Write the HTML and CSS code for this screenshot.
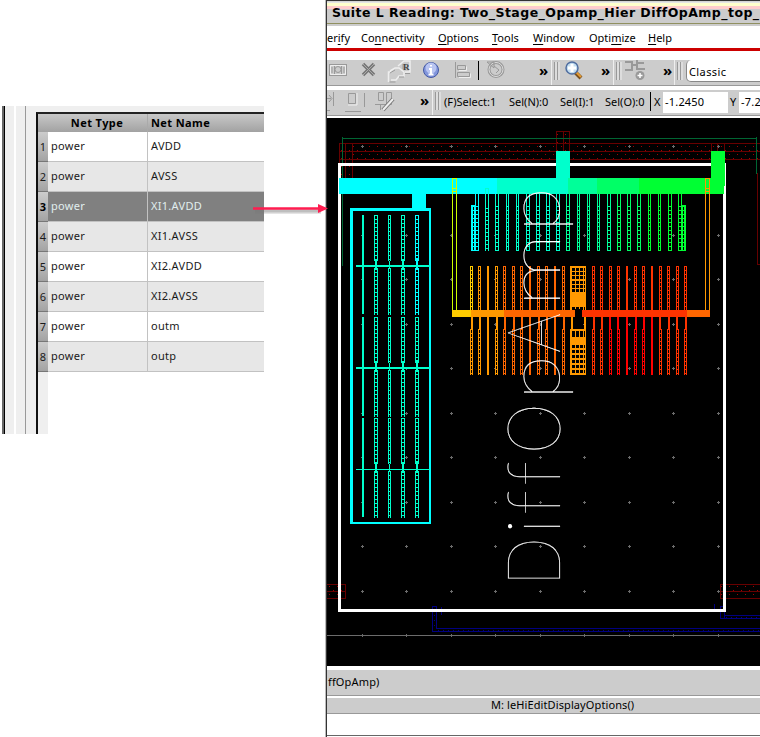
FILE: index.html
```html
<!DOCTYPE html>
<html lang="en">
<head>
<meta charset="utf-8">
<title>Suite L Reading</title>
<link rel="stylesheet" href="styles.css">
</head>
<body>
<main class="page">
  <section class="nets">
    <div class="gutter outer"></div>
    <div class="gutter inner"></div>
    <div class="tablewrap">
      <div class="head"><span class="num"></span><span class="type">Net Type</span><span class="name">Net Name</span></div>
      <div class="row"><span class="num">1</span><span class="type">power</span><span class="name">AVDD</span></div>
      <div class="row alt"><span class="num">2</span><span class="type">power</span><span class="name">AVSS</span></div>
      <div class="row sel"><span class="num">3</span><span class="type">power</span><span class="name">XI1.AVDD</span></div>
      <div class="row alt"><span class="num">4</span><span class="type">power</span><span class="name">XI1.AVSS</span></div>
      <div class="row"><span class="num">5</span><span class="type">power</span><span class="name">XI2.AVDD</span></div>
      <div class="row alt"><span class="num">6</span><span class="type">power</span><span class="name">XI2.AVSS</span></div>
      <div class="row"><span class="num">7</span><span class="type">power</span><span class="name">outm</span></div>
      <div class="row alt"><span class="num">8</span><span class="type">power</span><span class="name">outp</span></div>
      <div class="rest"></div>
    </div>
  </section>

  <section class="window">
    <header class="title">Suite L Reading: Two_Stage_Opamp_Hier DiffOpAmp_top_</header>
    <nav class="menu">
      <span class="m1">er<u>i</u>fy</span><span class="m2">Co<u>n</u>nectivity</span><span class="m3"><u>O</u>ptions</span><span class="m4"><u>T</u>ools</span><span class="m5"><u>W</u>indow</span><span class="m6">Opti<u>m</u>ize</span><span class="m7"><u>H</u>elp</span>
    </nav>
    <div class="bar bar1">
      <svg class="icons" width="217" height="25" viewBox="327 60 217 25" fill="none" stroke="#999">
        <path d="M330 64.500h16M330 75.500h16M329.500 64v12M346.500 64v12M334.500 66v8M341.500 66v8M332 67v6M344 67v6"/><circle cx="338" cy="69.500" r="3"/><path d="M330.500 65.500h15v9h-15z" stroke="#eee"/>
        <path d="M363 64l11 11M374 64l-11 11" stroke="#777" stroke-width="3.500"/><path d="M363 64l11 11M374 64l-11 11" stroke="#aaa" stroke-width="1"/>
        <path d="M388.500 82v-10h3M390 71l5-3h4l5 4v4h-5l-3 4h-5M398 66l6-5h6v11h-5" stroke="#eee" stroke-width="1.500"/><path d="M389.500 82h6M390 73l5-3M399 77h5M403 64v5M405 73.500h5"/>
        <text x="403" y="70" class="reg">R</text>
        <circle cx="431" cy="70" r="7.500" fill="#8296dc" stroke="#4258a4"/><circle cx="431" cy="68" r="5.500" fill="#b9c5f1" stroke="none"/><path d="M431 65v1.500M429 69h2v5M428.500 74.500h5" stroke="#fff" stroke-width="2"/>
        <path d="M455.500 62v16M457.500 65.500h8v4h-8zM457.500 72.500h12v4h-12z"/><path d="M459 70.500h7.500v-4M459 77.500h11.500v-4" stroke="#eee"/>
        <path d="M478.500 61v19" stroke="#000"/>
        <circle cx="496" cy="69.500" r="7" stroke-width="3"/><circle cx="496" cy="69.500" r="7" stroke="#ddd"/><path d="M487 62h7v6zM494 66l5 4-3 3"/>
      </svg>
      <b class="more">»</b>
      <i class="split"></i><i class="grip"></i>
      <svg width="22" height="25" viewBox="561 60 22 25" fill="none"><path d="M575 72l6 6" stroke="#785020" stroke-width="4"/><path d="M575 71l6 6" stroke="#e49b35" stroke-width="2"/><circle cx="572" cy="68" r="6" fill="#c4def0" stroke="#506ea0" stroke-width="1.500"/><path d="M572 64v8M568 68h8" stroke="#fff" stroke-width="3"/></svg>
      <b class="more more2">»</b><i class="split"></i><i class="grip"></i>
      <svg width="24" height="25" viewBox="623 60 24 25" fill="none" stroke="#999" stroke-width="2"><path d="M625 62h7v8h-7M632 65h5v-5M637 63h7M637 65v4h8"/><circle cx="640" cy="75.500" r="4.500" fill="#999" stroke="none"/><path d="M640 73v5M637.500 75.500h5" stroke="#fff" stroke-width="1.500"/></svg>
      <b class="more more3">»</b><i class="split"></i><i class="grip"></i>
      <span class="combo">Classic</span>
    </div>
    <div class="bar bar2">
      <svg width="91" height="25" viewBox="327 90 91 25" fill="none" stroke="#999"><path d="M327 98.500h4M329 95l3 3.500-3 3.500M333.500 92v14M327 110.500h3M348.500 93.500h7v10h-7zM345 111.500h16M364.500 93v14"/><path d="M348 105h9V93" stroke="#eee"/><path d="M378.500 92.500h5v8h-5zM386.500 92.500h5v12h-5zM375 104.500h16M380.500 104v6"/><path d="M383 110l10-11" stroke="#777" stroke-width="4"/><path d="M383 110l10-11" stroke="#eee" stroke-width="2"/></svg>
      <b class="more">»</b><i class="split"></i><i class="grip"></i>
      <span class="q1">(F)Select:1</span><span class="q2">Sel(N):0</span><span class="q3">Sel(I):1</span><span class="q4">Sel(O):0</span><i class="rule"></i><span class="q5">X</span><span class="field">-1.2450</span><span class="q6">Y</span><span class="field last">-7.2</span>
    </div>
    <svg class="canvas" width="433" height="548" viewBox="327 118 433 548" fill="none" shape-rendering="crispEdges">
      <defs>
        <pattern id="dots" width="8" height="8" patternUnits="userSpaceOnUse"><path d="M1 2.500h1M5 6.500h1" stroke="#a00000"/></pattern>
        <g id="row" stroke="#6c6c6c"><path d="M361 .5h3M405 .5h3M450 .5h3M494 .5h3M539 .5h3M583 .5h3M628 .5h3M672 .5h3M717 .5h3M362.500-1v3M406.500-1v3M451.500-1v3M495.500-1v3M540.500-1v3M584.500-1v3M629.500-1v3M673.500-1v3M718.500-1v3"/></g>
        <!-- ladder sets: a wide stroke with a dashed black core -->
        <path id="l4" d="M376 215v46M403 215v46M376 268v47M403 268v47"/>
        <path id="l5" d="M417 215v46M417 268v47"/>
        <path id="l3" d="M389.500 215v46M389.500 268v47"/>
        <g id="bank">
          <path d="M362 215h2v99h-2zM375 261h2v7h-2zM389 261h1v7h-1zM402 261h2v7h-2z" fill="#00ffcc"/>
          <use href="#l4" stroke="#00ffcc" stroke-width="4"/><use href="#l4" class="core"/>
          <use href="#l3" stroke="#00ffcc" stroke-width="3"/><use href="#l3" class="core thin"/>
          <path d="M374 259h4v2h-4zM401 259h4v2h-4zM374 268h4v2h-4zM401 268h4v2h-4z" fill="#00ffcc"/>
        </g>
        <g id="bank5"><use href="#l5" stroke-width="4"/><use href="#l5" class="core"/><path d="M417 258v12" stroke-width="2"/></g>
        <path id="up" d="M477 194v57M487 188v63M497 194v57M528 194v57M538 194v57M548 194v57M558 194v57M568 194v57M609 194v57M619 194v57M629 194v57M639 194v57M670 194v57M680 194v57"/>
        <path id="upn" d="M507.500 194v57M517.500 194v57M578.500 194v57M588.500 194v57M598.500 194v57M649.500 194v57M659.500 194v57"/>
        <path id="lo" d="M471.500 0v46M479.500 0v46M496.500 0v46M504.500 0v46M513.500 0v46M521.500 0v46M538.500 0v46M546.500 0v46M563.500 0v46M593.500 0v46M601.500 0v46M610.500 0v46M618.500 0v46M635.500 0v46M643.500 0v46M660.500 0v46M668.500 0v46M677.500 0v46M685.500 0v46"/>
        <path id="los" d="M488 0v46M530 0v46M555 0v46M627 0v46M652 0v46"/>
        <linearGradient id="cool" gradientUnits="userSpaceOnUse" x1="470" y1="0" x2="690" y2="0">
          <stop offset=".05" stop-color="#00ffff"/><stop offset=".05" stop-color="#00ffcc"/><stop offset=".42" stop-color="#00ffcc"/><stop offset=".42" stop-color="#00ff99"/><stop offset=".67" stop-color="#00ff99"/><stop offset=".67" stop-color="#00ff66"/><stop offset=".78" stop-color="#00ff66"/><stop offset=".78" stop-color="#00ff33"/>
        </linearGradient>
        <linearGradient id="warm" gradientUnits="userSpaceOnUse" x1="470" y1="0" x2="690" y2="0">
          <stop offset=".03" stop-color="#ffcc00"/><stop offset=".03" stop-color="#ff9900"/><stop offset=".14" stop-color="#ff9900"/><stop offset=".14" stop-color="#ff6600"/><stop offset=".5" stop-color="#ff6600"/><stop offset=".5" stop-color="#ff3300"/>
        </linearGradient>
        <linearGradient id="hot" gradientUnits="userSpaceOnUse" x1="470" y1="0" x2="690" y2="0">
          <stop offset=".03" stop-color="#ff9900"/><stop offset=".15" stop-color="#ff9900"/><stop offset=".15" stop-color="#ff6600"/><stop offset=".5" stop-color="#ff6600"/><stop offset=".5" stop-color="#ff3300"/><stop offset=".62" stop-color="#ff3300"/><stop offset=".62" stop-color="#ff0000"/><stop offset=".86" stop-color="#ff0000"/><stop offset=".86" stop-color="#ff3300"/>
        </linearGradient>
      </defs>
      <path d="M327 118h433v548H327z" fill="#000"/>
      <path d="M339 143h421v17H353v18h-14zM556 131h14v12h-14zM327 584h19v14h-19zM720 584h40v14h-40z" fill="url(#dots)"/>
      <path d="M339 143.500h421M339 151.500h421M339 159.500h421M339.500 143v35M345.500 143v35M352.500 143v35M556.500 151v-19.500h13V151M563.500 131v20M711.500 143v8M717.500 143v8M724.500 143v8M757.500 173v91.500h3M327 584.500h18.500v14H327M327 591.500h18M760 584.500h-39.500v14H760M720 591.500h40" stroke="#660000"/>
      <path d="M342.500 137v129M342 138.500h415M756.500 137v37" stroke="#006633"/>
      <use href="#row" y="146"/><use href="#row" y="235"/><use href="#row" y="279"/><use href="#row" y="324"/><use href="#row" y="368"/><use href="#row" y="413"/><use href="#row" y="457"/><use href="#row" y="502"/><use href="#row" y="546"/><use href="#row" y="591"/><use href="#row" y="635"/>
      <path d="M327 635.500h433" stroke="#6c6c6c"/>
      <path d="M436.500 606v22.500H760M432.500 606v25.500H760M432 606.500h5M441.500 607v8M714.500 604v8M760 615.500H725M720.500 606v12.500H760M724.500 606v12M720 606.500h4" stroke="#000080"/>
      <path d="M438 630.500h322M726 617.500h34M434.500 610v18" stroke="#000080" stroke-dasharray="1 4"/>
      <path d="M339.500 164.500h385v446h-385z" stroke="#fff" stroke-width="3"/>
      <path d="M342.500 166v100" stroke="#006633"/>
      <path d="M339 178h158v16H426v14h5v316h-81V208h62v-14h-73zM353 211v311h76V211z" fill="#00ffff" fill-rule="evenodd"/>
      <path d="M497 178h59v-27h14v27h-2v16h-71z" fill="#00ffcc"/><path d="M568 178h29v16h-29z" fill="#00ff99"/><path d="M597 178h42v16h-42z" fill="#00ff66"/><path d="M639 178h72v-27h14v35h-1v8h-85z" fill="#00ff33"/>
      <use href="#bank"/><use href="#bank" y="102"/><use href="#bank" y="203"/>
      <use href="#bank5" stroke="#00ffff"/><use href="#bank5" y="102" stroke="#00ffcc"/><use href="#bank5" y="203" stroke="#00ffcc"/>
      <path d="M356 265h74v2h-74zM356 367h74v2h-74zM356 469h74v1h-74z" fill="#00ffcc"/>
      <use href="#up" stroke="url(#cool)" stroke-width="4"/><use href="#up" class="core"/>
      <use href="#upn" stroke="url(#cool)" stroke-width="3"/><use href="#upn" class="core thin"/>
      <path d="M477 194v11M487 189v16M497 194v11M528 194v11M538 194v11M548 194v11M558 194v11M568 194v11M609 194v11M619 194v11M629 194v11M639 194v11M670 194v11M680 194v11" stroke="#000" stroke-width="2"/>
      <path d="M507.500 194v11M517.500 194v11M578.500 194v11M588.500 194v11M598.500 194v11M649.500 194v11M659.500 194v11" stroke="#000"/>
      <path d="M486 189h2v5h-2z" fill="#00ffff"/>
      <path d="M471 205h4v46h-4z" fill="#00ffff"/><path d="M473.500 206v44" class="core thin"/>
      <path d="M682 205h4v46h-4z" fill="#00ff33"/><path d="M683.500 206v44" class="core thin"/>
      <path d="M452.500 178v132M456.500 178v132M452 178.500h5M452 188.500h5M452 191.500h5" stroke="#ccff00"/>
      <path d="M705.500 178v132M709.500 178v132M705 178.500h5M705 188.500h5M705 191.500h5" stroke="#ff9900"/>
      <use href="#lo" y="266" stroke="url(#warm)" stroke-width="3"/><use href="#lo" y="266" class="core thin"/><use href="#los" y="266" stroke="url(#warm)" stroke-width="2"/>
      <use href="#lo" y="329" stroke="url(#hot)" stroke-width="3"/><use href="#lo" y="329" class="core thin"/><use href="#los" y="329" stroke="url(#hot)" stroke-width="2"/>
      <path d="M472 317v13M480 317v13M488 317v13M496.500 317v13M505 317v13M513.500 317v13M522 317v13M530 317v13M538.500 317v13M547 317v13M555 317v13M563.500 317v13M593.500 317v13M602 317v13M610 317v13M618 317v13M627 317v13M635.500 317v13M644 317v13M652 317v13M660 317v13M668.500 317v13M677 317v13M685.500 317v13" stroke="url(#hot)" stroke-width="2"/>
      <path d="M452 310h19v7h-19z" fill="#ffcc00"/><path d="M471 310h33v7h-33z" fill="#ff9900"/><path d="M504 310h71v7h-71zM687 310h23v7h-23z" fill="#ff6600"/><path d="M582 310h105v7H582z" fill="#ff3300"/>
      <path d="M570 266h16v44h-16zM570 329h16v46h-16zM571 317h2v12h-2zM584 317h2v12h-2z" fill="#ff9900"/>
      <path d="M572 269h13M572 273h13M572 277.500h13M572 282h13M572 286.500h13M572 290h13M572 308.500h13M572 332h13M572 335h13M572 346.500h13M572 351.500h13M572 356.500h13M572 361.500h13M572 366.500h13M572 371.500h13" stroke="#000" stroke-width="3" stroke-dasharray="3 1"/>
      <path d="M575 309h7v10h-7z" fill="#000"/>
      <g class="lettering" transform="translate(560 579) rotate(-90)">
        <text transform="translate(-7 0) scale(.86 1)">D</text><text transform="translate(45 0)">i</text><text x="64">f</text><text x="93">f</text><text transform="translate(125 0) scale(.86 1)">O</text><text transform="translate(179 0) scale(1.1 1)">p</text><text transform="translate(226 0) scale(.84 1)">A</text><text transform="translate(271.500 0) scale(1.26 1)">m</text><text transform="translate(347 0) scale(1.1 1)">p</text>
      </g>
    </svg>
    <div class="status">ffOpAmp)</div>
    <div class="hint">M: leHiEditDisplayOptions()</div>
    <div class="prompt"></div>
  </section>

  <svg class="arrow" width="80" height="22" viewBox="251 200 80 22"><path d="M255 211.500h66" stroke="#777" stroke-opacity=".2" stroke-width="5"/><path d="M255 211h66" stroke="#777" stroke-opacity=".35" stroke-width="3"/><path d="M253 208.500h66" stroke="#ff1d50" stroke-width="2.500"/><path d="M318 204l10 4.500-10 4.500z" fill="#ff1d50"/></svg>
</main>
</body>
</html>
```
FILE: styles.css
```css
* { box-sizing: border-box; }
body { margin: 0; background: #fff; color: #000; font: 11px "Noto Sans", "Open Sans", sans-serif; }
.page { position: relative; display: flex; width: 760px; height: 737px; overflow: hidden; }

.nets { display: flex; width: 262px; height: 328px; margin: 106px 61px 0 2px; background: #efefef; color: #1a1a1a; letter-spacing: .3px; }
.gutter { height: 100%; }
.outer { width: 14px; border-left: 2px solid #666; border-right: 2px solid #fff; box-shadow: inset 1px 0 #000; }
.inner { width: 20px; border-left: 9px solid #efefef; box-shadow: inset 1px 0 #999; }
.tablewrap { display: flex; flex-direction: column; width: 228px; margin-top: 6px; border-left: 2px solid #111; border-top: 2px solid #222; }
.head, .row { display: flex; }
.head { height: 18px; font-weight: bold; line-height: 18px; color: #000; letter-spacing: .4px; background: linear-gradient(#c8c8c8, #a2a2a2); }
.num { width: 10px; text-align: center; flex: none; }
.type { width: 100px; flex: none; }
.head .type { text-align: center; padding-right: 1px; border-right: 1px solid #aaa; }
.name { flex: 1; padding-left: 3px; white-space: nowrap; }
.row { height: 30px; line-height: 28px; background: #fff; }
.row .num { background: linear-gradient(#ccc, #a3a3a3); line-height: 30px; border-bottom: 1px solid #777; letter-spacing: 0; }
.row .type { padding-left: 3px; border-right: 1px solid #c2c2c2; border-bottom: 1px solid #c2c2c2; }
.row .name { border-bottom: 1px solid #c2c2c2; }
.row.alt { background: #e7e7e7; }
.row.sel { background: #808080; color: #e0eeee; }
.sel .num { font-weight: bold; color: #000; }
.rest { flex: 1; margin-left: 10px; background: #fff; }

.window { width: 435px; height: 737px; flex: none; border-left: 1px solid #bbb; box-shadow: inset 1px 0 #333; padding-left: 1px; display: flex; flex-direction: column; overflow: hidden; }
.title { height: 26px; flex: none; padding: 3px 0 0 5px; font: bold 12.5px/19px "DejaVu Sans", sans-serif; letter-spacing: .46px; white-space: nowrap; background: linear-gradient(#333 1px, #ccc 1px, #eee 3px, #ffffcc 3px, #ffffcc 6px, #ffcccc 6px, #ffcccc 9px, #ccc 9px, #ccc 23px, #909060 23px, #909060 24px, #ccc 24px); }
.menu { display: flex; height: 34px; flex: none; line-height: 24px; border-bottom: 9px solid #fff; background: linear-gradient(#fff 22px, #c00 22px); white-space: nowrap; }
.menu span { flex: none; height: 22px; }
.menu u { text-underline-offset: 2px; }
.m1 { width: 34px; } .m2 { width: 77px; } .m3 { width: 54px; } .m4 { width: 41px; } .m5 { width: 56px; } .m6 { width: 59px; }
.bar { display: flex; height: 26px; flex: none; background: #ccc; border-bottom: 1px solid #999; white-space: nowrap; overflow: hidden; }
.bar1 { margin-bottom: 4px; }
.bar2 { margin-bottom: 2px; line-height: 24px; }
.bar svg, .bar span, .bar i, .bar b { flex: none; }
.reg { font: bold 9px "Liberation Serif", serif; fill: #444; stroke: none; }
.more { width: 13px; font-size: 15px; line-height: 21px; margin-left: -5px; margin-right: -3px; }
.bar2 .more { margin-left: 2px; }
.bar1 .more2 { margin-left: 18px; }
.bar1 .more3 { margin-left: 16px; margin-right: -4px; }
.split { width: 3px; border-right: 1px solid #eee; }
.grip { width: 6px; height: 18px; margin: 2px 1px 0 2px; background: repeating-linear-gradient(90deg, #999 0 1px, #ddd 1px 3px); }
.combo { width: 90px; height: 22px; margin-left: 2px; padding-left: 2px; line-height: 23px; border: 1px solid #888; border-top: 0; border-radius: 5px; background: #fff; letter-spacing: .4px; }
.q1 { margin-left: 2px; width: 65px; } .q2 { width: 51px; } .q3 { width: 45px; } .q4 { width: 45px; }
.rule { width: 1px; height: 19px; margin-top: 2px; background: #000; }
.q5 { width: 12px; padding-left: 3px; }
.field { width: 65px; height: 21px; margin-top: 2px; padding-left: 2px; line-height: 20px; letter-spacing: .2px; background: #fff; }
.q6 { width: 11px; padding-left: 2px; }
.canvas { display: block; flex: none; }
.core { stroke: #000; stroke-width: 2; stroke-dasharray: 3 1; stroke-dashoffset: 3; }
.thin { stroke-width: 1; }
.lettering { font: 100 75px Lato, "Open Sans", sans-serif; fill: #fff; stroke: #fff; stroke-width: .15px; }
.status { height: 26px; flex: none; margin-top: 4px; padding-left: 1px; line-height: 24px; letter-spacing: .15px; background: #ccc; border-bottom: 1px solid #999; }
.hint { height: 16px; flex: none; margin-top: 2px; padding-left: 164px; line-height: 14px; letter-spacing: .1px; background: #ccc; border-bottom: 1px solid #999; }
.prompt { height: 22px; border-bottom: 1px solid #666; }
.arrow { position: absolute; left: 251px; top: 200px; }
```
